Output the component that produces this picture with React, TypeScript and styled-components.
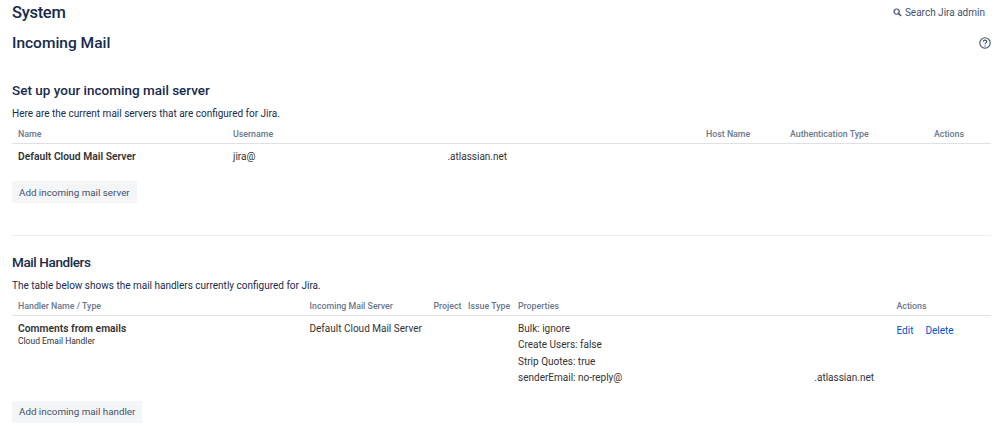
import React from "react";
import styled, { createGlobalStyle } from "styled-components";

const GlobalStyle = createGlobalStyle`
  html, body {
    margin: 0;
    padding: 0;
    background: #fff;
  }
  body {
    font-family: "Roboto", "Liberation Sans", sans-serif;
    color: #172b4d;
  }
`;

const serverCols = "215px 473px 84px 144px 1fr";
const handlerCols = "291.5px 124px 34.5px 50px 378.5px 1fr";

const App = () => {
  return (
    <Page>
      <GlobalStyle />
      <TopBar>
        <PageTitle>System</PageTitle>
        <SearchLink>
          <svg width="9" height="9" viewBox="0 0 10 10" fill="none">
            <circle cx="4" cy="4" r="2.9" stroke="#42526e" strokeWidth="1.3" />
            <path d="M6.2 6.2 9 9" stroke="#42526e" strokeWidth="1.6" />
          </svg>
          Search Jira admin
        </SearchLink>
      </TopBar>
      <TitleRow>
        <SubTitle>Incoming Mail</SubTitle>
        <svg width="12" height="12" viewBox="0 0 12 12" fill="none">
          <circle cx="6" cy="6" r="5.2" stroke="#42526e" strokeWidth="1.1" />
          <path
            d="M4.3 4.7c0-1 .8-1.6 1.7-1.6s1.7.6 1.7 1.5c0 1.3-1.7 1.3-1.7 2.7"
            stroke="#42526e"
            strokeWidth="1.1"
          />
          <circle cx="6" cy="8.9" r=".7" fill="#42526e" />
        </svg>
      </TitleRow>

      <Section>
        <SectionTitle>Set up your incoming mail server</SectionTitle>
        <Description>
          Here are the current mail servers that are configured for Jira.
        </Description>
        <HeaderRow $cols={serverCols}>
          <HeaderCell>Name</HeaderCell>
          <HeaderCell>Username</HeaderCell>
          <HeaderCell>Host Name</HeaderCell>
          <HeaderCell>Authentication Type</HeaderCell>
          <HeaderCell>Actions</HeaderCell>
        </HeaderRow>
        <BodyRow $cols={serverCols}>
          <Cell>
            <Strong>Default Cloud Mail Server</Strong>
          </Cell>
          <Cell>
            jira@<Redacted $width={192} />.atlassian.net
          </Cell>
        </BodyRow>
        <AddButton>Add incoming mail server</AddButton>
      </Section>

      <Divider />

      <HandlersSection>
        <SectionTitle $tight>Mail Handlers</SectionTitle>
        <Description>
          The table below shows the mail handlers currently configured for Jira.
        </Description>
        <HeaderRow $cols={handlerCols}>
          <HeaderCell>Handler Name / Type</HeaderCell>
          <HeaderCell>Incoming Mail Server</HeaderCell>
          <HeaderCell>Project</HeaderCell>
          <HeaderCell>Issue Type</HeaderCell>
          <HeaderCell>Properties</HeaderCell>
          <HeaderCell>Actions</HeaderCell>
        </HeaderRow>
        <BodyRow $cols={handlerCols}>
          <Cell>
            <Strong>Comments from emails</Strong>
            <Small>Cloud Email Handler</Small>
          </Cell>
          <Cell>Default Cloud Mail Server</Cell>
          <Cell />
          <Cell />
          <PropertyList>
            <div>Bulk: ignore</div>
            <div>Create Users: false</div>
            <div>Strip Quotes: true</div>
            <div>
              senderEmail: no-reply@
              <Redacted $width={192} />
              .atlassian.net
            </div>
          </PropertyList>
          <ActionCell>
            <ActionLink>Edit</ActionLink>
            <ActionLink>Delete</ActionLink>
          </ActionCell>
        </BodyRow>
        <AddButton $tight>Add incoming mail handler</AddButton>
      </HandlersSection>
    </Page>
  );
};

const Page = styled.div`
  width: 998px;
  height: 439px;
  box-sizing: border-box;
  padding: 0 7px 0 12px;
  overflow: hidden;
`;

const TopBar = styled.div`
  display: flex;
  justify-content: space-between;
  align-items: center;
  height: 24px;
  margin-bottom: 7px;
`;

const PageTitle = styled.h1`
  margin: 0;
  font-size: 16.5px;
  font-weight: 500;
  letter-spacing: -0.3px;
  color: #172b4d;
`;

const SearchLink = styled.a`
  display: flex;
  align-items: center;
  gap: 3px;
  margin: 1px 6px 0 0;
  font-size: 10px;
  color: #42526e;
`;

const TitleRow = styled.div`
  display: flex;
  justify-content: space-between;
  align-items: center;
  height: 24px;
`;

const SubTitle = styled.h2`
  margin: 0;
  font-size: 15.5px;
  font-weight: 500;
  color: #172b4d;
`;

const Section = styled.section`
  margin-top: 25px;
`;

const HandlersSection = styled.section`
  margin-top: 16px;
`;

const SectionTitle = styled.h3<{ $tight?: boolean }>`
  margin: 0;
  height: 20px;
  line-height: 20px;
  font-size: 13.5px;
  font-weight: 500;
  letter-spacing: ${(p) => (p.$tight ? "-0.4px" : "0")};
  color: #172b4d;
`;

const Description = styled.p`
  margin: 5px 0 0;
  height: 18px;
  line-height: 18px;
  font-size: 10px;
  color: #172b4d;
`;

const HeaderRow = styled.div<{ $cols: string }>`
  display: grid;
  grid-template-columns: ${(p) => p.$cols};
  align-items: center;
  box-sizing: border-box;
  height: 20px;
  margin-top: 1px;
  padding-left: 6px;
  border-bottom: 1px solid #dfe1e6;
`;

const HeaderCell = styled.div`
  font-size: 8.8px;
  font-weight: 500;
  white-space: nowrap;
  color: #6b778c;
`;

const BodyRow = styled.div<{ $cols: string }>`
  display: grid;
  grid-template-columns: ${(p) => p.$cols};
  padding: 5px 0 0 6px;
  font-size: 10px;
  color: #333;
`;

const Cell = styled.div`
  min-height: 16px;
  line-height: 16px;
  white-space: nowrap;
`;

const Strong = styled.div`
  font-size: 10.3px;
  font-weight: 600;
  color: #333;
`;

const Small = styled.div`
  margin-top: -2px;
  line-height: 12px;
  font-size: 8.5px;
`;

const Redacted = styled.span<{ $width: number }>`
  display: inline-block;
  width: ${(p) => p.$width}px;
`;

const PropertyList = styled.div`
  line-height: 16.4px;
  white-space: nowrap;
`;

const ActionCell = styled.div`
  display: flex;
  gap: 12px;
  padding-top: 2px;
  line-height: 16px;
`;

const ActionLink = styled.a`
  color: #0052cc;
`;

const AddButton = styled.button<{ $tight?: boolean }>`
  display: block;
  height: 22px;
  margin-top: ${(p) => (p.$tight ? 14 : 16)}px;
  padding: 0 7px;
  border: none;
  border-radius: 2px;
  background: #f4f5f7;
  font-family: inherit;
  font-size: 9.8px;
  color: #42526e;
`;

const Divider = styled.hr`
  height: 1px;
  margin: 32px 0 0;
  border: none;
  background: #ebecf0;
`;

export default App;
